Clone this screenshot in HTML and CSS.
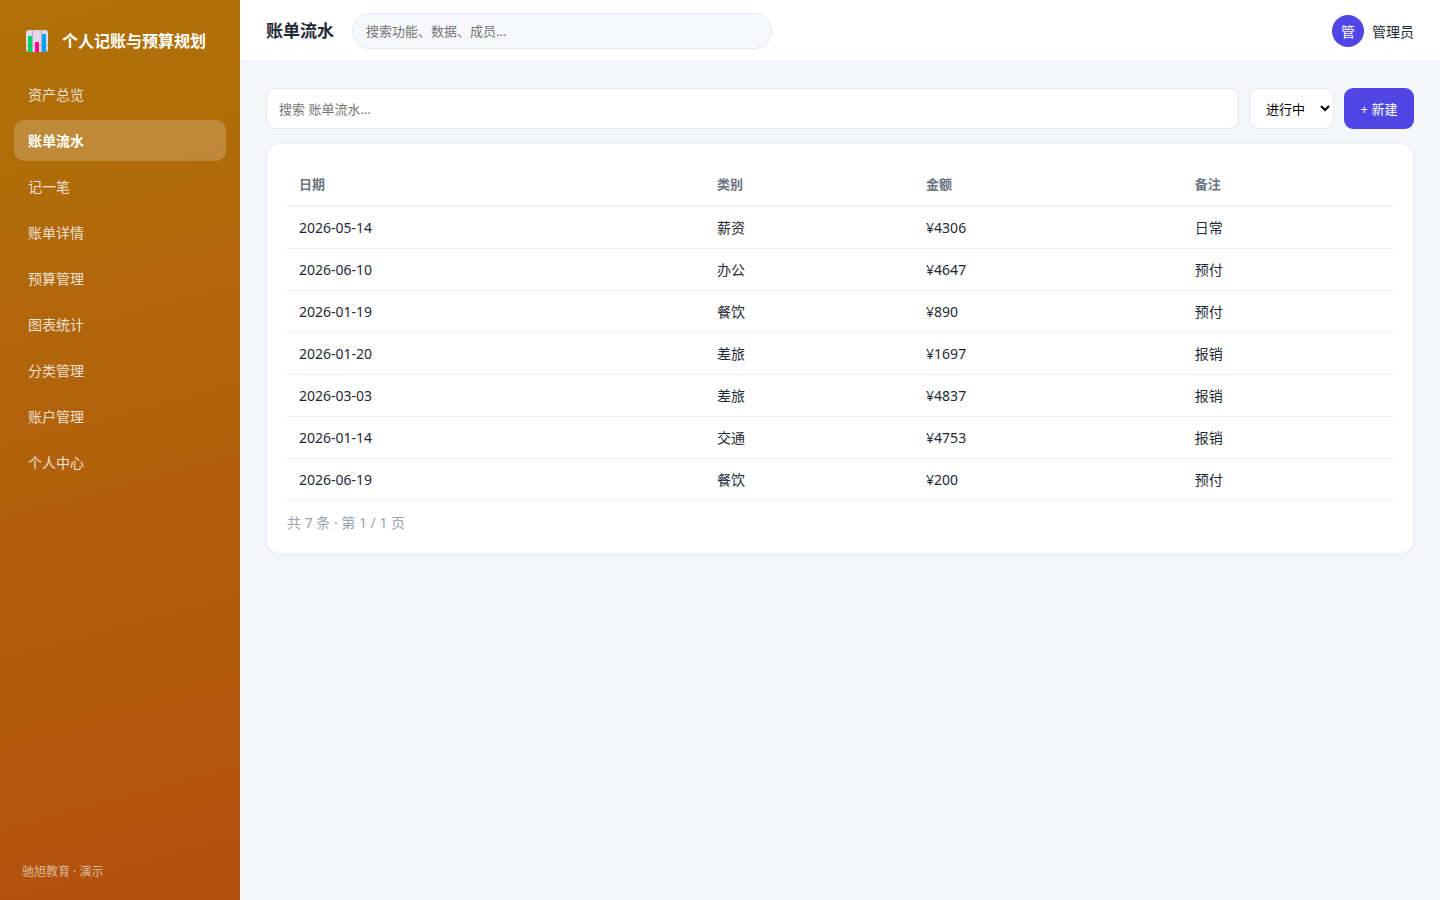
FILE: index.html
```html
<!DOCTYPE html>
<html lang="zh-CN">
<head>
<meta charset="utf-8">
<meta name="viewport" content="width=device-width, initial-scale=1">
<title>账单流水</title>
<link rel="stylesheet" href="styles.css">
</head>
<body>
<div class="app">
  <aside class="sidebar">
    <div class="brand">
      <svg class="brand-icon" viewBox="0 0 22 22" aria-hidden="true">
        <rect width="22" height="22" rx="3" fill="#e1d8ec"/>
        <path d="M6.500 0v22M15.500 0v22M0 15.500h22" stroke="#b4acbc" stroke-width="1" fill="none"/>
        <rect x="2" y="6" width="4" height="16" fill="#00d26a"/>
        <rect x="9" y="12" width="4" height="10" fill="#f70a8d"/>
        <rect x="16" y="4" width="4" height="18" fill="#00a6ed"/>
      </svg>
      <span>个人记账与预算规划</span>
    </div>
    <nav class="nav">
      <a href="#">资产总览</a>
      <a href="#" class="active" aria-current="page">账单流水</a>
      <a href="#">记一笔</a>
      <a href="#">账单详情</a>
      <a href="#">预算管理</a>
      <a href="#">图表统计</a>
      <a href="#">分类管理</a>
      <a href="#">账户管理</a>
      <a href="#">个人中心</a>
    </nav>
    <div class="sidebar-foot">驰旭教育 · 演示</div>
  </aside>
  <div class="main">
    <header class="topbar">
      <h1 class="page-title">账单流水</h1>
      <input class="global-search" type="text" aria-label="全局搜索" placeholder="搜索功能、数据、成员…">
      <div class="user"><span class="avatar">管</span><span>管理员</span></div>
    </header>
    <main class="content">
      <div class="toolbar">
        <input class="field" type="text" aria-label="搜索账单流水" placeholder="搜索 账单流水...">
        <select class="status" aria-label="状态"><option>进行中</option></select>
        <button class="create" type="button">+ 新建</button>
      </div>
      <section class="card">
        <table class="records">
          <colgroup><col class="col-date"><col class="col-type"><col class="col-amount"><col class="col-note"></colgroup>
          <thead><tr><th>日期</th><th>类别</th><th>金额</th><th>备注</th></tr></thead>
          <tbody>
            <tr><td>2026-05-14</td><td>薪资</td><td>¥4306</td><td>日常</td></tr>
            <tr><td>2026-06-10</td><td>办公</td><td>¥4647</td><td>预付</td></tr>
            <tr><td>2026-01-19</td><td>餐饮</td><td>¥890</td><td>预付</td></tr>
            <tr><td>2026-01-20</td><td>差旅</td><td>¥1697</td><td>报销</td></tr>
            <tr><td>2026-03-03</td><td>差旅</td><td>¥4837</td><td>报销</td></tr>
            <tr><td>2026-01-14</td><td>交通</td><td>¥4753</td><td>报销</td></tr>
            <tr><td>2026-06-19</td><td>餐饮</td><td>¥200</td><td>预付</td></tr>
          </tbody>
        </table>
        <div class="pager">共 7 条 · 第 1 / 1 页</div>
      </section>
    </main>
  </div>
</div>
</body>
</html>
```
FILE: styles.css
```css
* { box-sizing: border-box; }
body {
  margin: 0;
  background: #f5f7fb;
  color: #1f2937;
  font: 14px/21px "Noto Sans", "Noto Sans CJK SC", sans-serif;
}
input, select, button { font-family: inherit; font-size: 13px; }

.app { display: flex; min-height: 100vh; }

.sidebar {
  display: flex;
  flex: 0 0 240px;
  flex-direction: column;
  padding: 20px 14px;
  background: linear-gradient(165deg, #b07208, #b3500e);
  color: #fff;
}
.brand {
  display: flex;
  align-items: center;
  gap: 14px;
  padding: 8px 12px 20px;
  font-size: 16px;
  line-height: 26px;
  font-weight: 700;
  white-space: nowrap;
}
.brand-icon { width: 22px; height: 22px; }
.nav { display: flex; flex-direction: column; gap: 5px; }
.nav a {
  padding: 10px 14px;
  border-radius: 10px;
  color: rgba(255, 255, 255, .82);
  text-decoration: none;
}
.nav .active { background: rgba(255, 255, 255, .2); color: #fff; font-weight: 700; }
.sidebar-foot {
  margin-top: auto;
  padding: 0 8px;
  color: rgba(255, 255, 255, .6);
  font-size: 12px;
  line-height: 16px;
}

.main { flex: 1; min-width: 0; }
.topbar {
  display: flex;
  align-items: center;
  gap: 18px;
  padding: 13px 26px 12px;
  border-bottom: 1px solid #eceef4;
  background: #fff;
}
.page-title { margin: 0; font-size: 17px; line-height: 26px; font-weight: 700; }
.global-search {
  width: 420px;
  height: 36px;
  padding: 0 13px;
  border: 1px solid #e5e7f0;
  border-radius: 18px;
  background: #f7f8fc;
}
.user { display: flex; align-items: center; gap: 8px; margin-left: auto; }
.avatar {
  display: grid;
  place-items: center;
  width: 32px;
  height: 32px;
  border-radius: 50%;
  background: #4f46e5;
  color: #fff;
}

.content { padding: 26px; }
.toolbar { display: flex; gap: 10px; height: 41px; margin-bottom: 14px; }
.field, .status { border: 1px solid #e5e7f0; border-radius: 9px; background: #fff; }
.field { flex: 1; min-width: 0; padding: 0 12px; }
.status { width: 85px; padding: 0 0 0 12px; color: #000; }
.create {
  width: 70px;
  padding: 0;
  border: 0;
  border-radius: 9px;
  background: #4f46e5;
  color: #fff;
}

.card {
  padding: 20px;
  border: 1px solid #f0f1f6;
  border-radius: 14px;
  background: #fff;
  box-shadow: 0 1px 4px rgba(30, 40, 90, .05);
}
.records { width: 100%; border-collapse: separate; border-spacing: 0; table-layout: fixed; }
.col-date { width: 37.8%; }
.col-type { width: 18.9%; }
.col-amount { width: 24.3%; }
.col-note { width: 19%; }
.records th, .records td { padding: 10px 12px; text-align: left; }
.records th { border-bottom: 2px solid #eef0f5; color: #6b7280; font-size: 13px; font-weight: 700; }
.records td { border-bottom: 1px solid #eff0f4; }
.pager { padding-top: 12px; color: #9ca3af; line-height: 20px; }
```
